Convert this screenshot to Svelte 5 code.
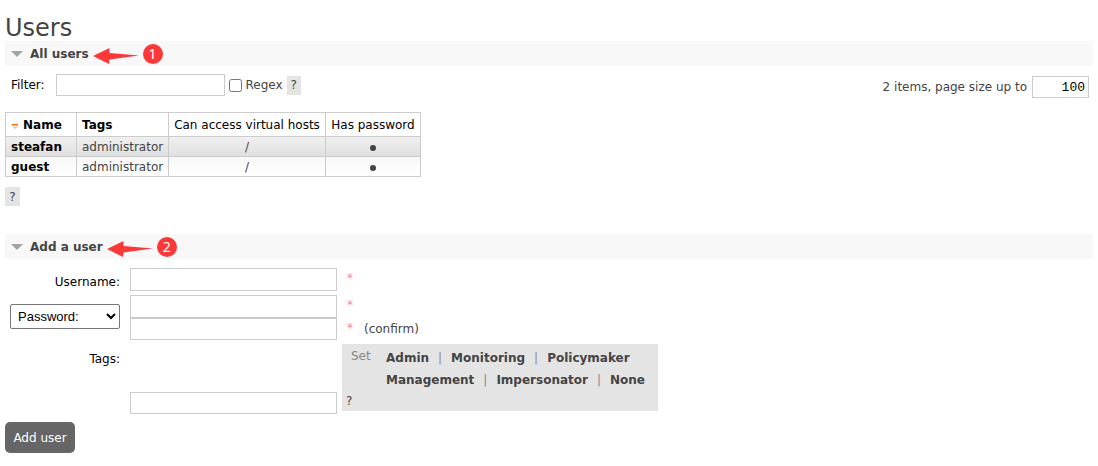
<script>
  let filter = $state('');
  let regex = $state(false);
  let pageSize = $state('100');
  let username = $state('');
  let password = $state('');
  let confirm = $state('');
  let tags = $state('');
  let method = $state('password');

  const users = [
    { name: 'steafan', tags: 'administrator', vhosts: '/', password: true },
    { name: 'guest', tags: 'administrator', vhosts: '/', password: true }
  ];
  const tagRows = [
    [['Admin', 'administrator'], ['Monitoring', 'monitoring'], ['Policymaker', 'policymaker']],
    [['Management', 'management'], ['Impersonator', 'impersonator'], ['None', '']]
  ];
</script>

{#snippet heading(label, n)}
  <h2>
    <svg class="caret" viewBox="0 0 12 6" aria-hidden="true"><path d="M0 0H12L6 6Z" fill="#a3a3a3" /></svg>
    <span>{label}</span>
    <svg class="arrow" viewBox="0 0 46 16" aria-hidden="true">
      <path d="M0 8L16.500 0V5L46 7.500L16.500 11.500L16 16Z" fill="#fc3838" />
    </svg>
    <span class="step">{n}</span>
  </h2>
{/snippet}

<main>
  <h1>Users</h1>

  <section class="all">
    {@render heading('All users', 1)}
    <div class="filter">
      <label class="dark" for="filter">Filter:</label>
      <input id="filter" class="search" type="text" bind:value={filter} />
      <input id="regex" type="checkbox" bind:checked={regex} />
      <label class="regex" for="regex">Regex</label>
      <button type="button" class="help">?</button>
      <div class="paging">
        <label for="size">2 items, page size up to</label>
        <input id="size" type="text" bind:value={pageSize} />
      </div>
    </div>

    <table>
      <colgroup><col class="c1" /><col class="c2" /><col class="c3" /><col class="c4" /></colgroup>
      <thead>
        <tr>
          <th class="sort">
            <svg viewBox="0 0 6 5" aria-hidden="true"><path d="M.5 1H5.500L3 4.500Z" fill="#fff" stroke="#f9a58b" /><path d="M0 .5H6" stroke="#f60" /></svg>Name
          </th>
          <th class="sort">Tags</th>
          <th>Can access virtual hosts</th>
          <th>Has password</th>
        </tr>
      </thead>
      <tbody>
        {#each users as user}
          <tr>
            <td><a href="#/users/{user.name}">{user.name}</a></td>
            <td>{user.tags}</td>
            <td class="mid">{user.vhosts}</td>
            <td class="mid">{#if user.password}<i class="dot"></i>{/if}</td>
          </tr>
        {/each}
      </tbody>
    </table>
    <button type="button" class="help">?</button>
  </section>

  <section>
    {@render heading('Add a user', 2)}
    <form onsubmit={(e) => e.preventDefault()}>
      <div class="row">
        <label class="dark name" for="username">Username:</label>
        <input id="username" type="text" bind:value={username} />
        <span class="req">*</span>
      </div>
      <div class="row">
        <select aria-label="Credential type" bind:value={method}>
          <option value="password">Password:</option>
          <option value="hash">Hashed password:</option>
          <option value="none">No password</option>
        </select>
        <div class="stack">
          <div class="line">
            <input aria-label="Password" type="password" bind:value={password} />
            <span class="req">*</span>
          </div>
          <div class="line">
            <input id="confirm" type="password" bind:value={confirm} />
            <span class="req">*</span>
            <label for="confirm">(confirm)</label>
          </div>
        </div>
      </div>
      <div class="row tagrow">
        <label class="dark name" for="tags">Tags:</label>
        <input id="tags" type="text" bind:value={tags} />
        <div class="panel">
          <span class="set">Set</span>
          <div>
            {#each tagRows as row}
              <div class="links">
                {#each row as [label, value], i}
                  {#if i > 0}<span class="bar">|</span>{/if}
                  <button type="button" onclick={() => (tags = value)}>{label}</button>
                {/each}
              </div>
            {/each}
          </div>
          <button type="button" class="hint">?</button>
        </div>
      </div>
      <button type="submit" class="submit">Add user</button>
    </form>
  </section>
</main>

<style>
  :global(body) { background: #fff; }
  main {
    padding: 15px 5px 13px;
    color: #444;
    font: 12px/16px Verdana, "DejaVu Sans", sans-serif;
  }
  input, button { font: inherit; color: inherit; box-sizing: border-box; margin: 0; }
  button { border: 0; padding: 0; background: none; cursor: pointer; }
  input:not([type='checkbox']) {
    height: 22px;
    border: 1px solid #ccc;
    padding: 0 4px;
    background: #fff;
    color: #000;
  }
  h1 { margin: 0; font-size: 24px; line-height: 26px; font-weight: 400; }
  h2 {
    display: flex;
    align-items: center;
    height: 25px;
    margin: 0;
    padding-left: 6px;
    background: #f8f8f8;
    font-size: 12px;
    font-weight: 700;
  }
  .caret { width: 12px; height: 6px; margin-right: 7px; }
  .arrow { width: 46px; height: 16px; margin: 4px 4px 0; }
  .step {
    width: 20px;
    height: 20px;
    border-radius: 50%;
    background: #fc3838;
    color: #fff;
    font: 14px/20px "Noto Sans", sans-serif;
    text-align: center;
  }
  .dark { color: #000; }
  .all { padding-bottom: 28px; }

  .filter { display: flex; align-items: center; padding: 8px 4px 0 6px; height: 22px; }
  .search { width: 169px; margin-left: 11px; }
  .filter input[type='checkbox'] { width: 13px; height: 13px; margin: 0 4px; }
  .help { display: block; width: 15px; height: 19px; background: #e4e4e4; }
  .filter .help { width: 14px; margin-left: 4px; }
  .paging { display: flex; align-items: center; gap: 5px; margin-left: auto; padding-top: 4px; }
  .paging input { width: 57px; padding: 0 3px; text-align: right; font: 13px "Liberation Mono", monospace; }

  table { width: 416px; margin: 16px 0 10px; border-collapse: collapse; table-layout: fixed; white-space: nowrap; }
  .c1 { width: 71px; }
  .c2 { width: 92px; }
  .c3 { width: 157px; }
  .c4 { width: 95px; }
  th, td { border: 1px solid #ccc; padding: 0 5px; text-align: left; }
  th { height: 23px; color: #000; font-weight: 400; text-align: center; }
  th.sort { font-weight: 700; text-align: left; }
  th svg { width: 6px; height: 5px; margin: 0 5px 0 1px; vertical-align: 0; }
  td { height: 19px; }
  td a { color: #000; font-weight: 700; text-decoration: none; }
  tbody tr:nth-child(odd) { background: linear-gradient(#f0f0f0, #dfdfdf); }
  tbody tr:nth-child(even) { background: linear-gradient(#f8f8f8, #fff); }
  .mid { text-align: center; }
  .dot { display: inline-block; width: 6px; height: 6px; border-radius: 50%; background: #444; vertical-align: 0; }

  form { padding-top: 9px; }
  .row { display: flex; gap: 10px; margin-bottom: 4px; }
  .row input { width: 207px; height: 23px; }
  .name { width: 115px; padding: 6px 0 0; text-align: right; }
  .req { color: #f88; width: 7px; padding-top: 2px; }
  select {
    width: 110px;
    height: 25px;
    margin: 9px 0 0 5px;
    padding: 0 3px;
    border: 1px solid #767676;
    border-radius: 2px;
    background: #fff;
    color: #000;
    font: 13px "Liberation Sans", Arial, sans-serif;
  }
  .line { display: flex; gap: 10px; }
  .line + .line input { height: 22px; }
  .line label { padding-top: 3px; }
  .tagrow { margin-bottom: 11px; gap: 5px; }
  .tagrow .name { margin-right: 5px; padding-top: 7px; }
  .tagrow input { align-self: flex-end; height: 22px; margin-bottom: -3px; }
  .panel {
    display: grid;
    grid-template-columns: 40px 1fr;
    box-sizing: border-box;
    width: 316px;
    padding: 3px 4px 0;
    line-height: 22px;
    background: #e4e4e4;
  }
  .set { padding-left: 5px; line-height: 18px; color: #888; }
  .links { display: flex; gap: 9px; height: 22px; }
  .links button { font-weight: 700; }
  .bar { color: #888; }
  .hint { grid-column: 1 / -1; height: 20px; line-height: 20px; text-align: left; }
  .submit { display: block; width: 70px; height: 31px; border-radius: 5px; background: #666; color: #fff; }
</style>
